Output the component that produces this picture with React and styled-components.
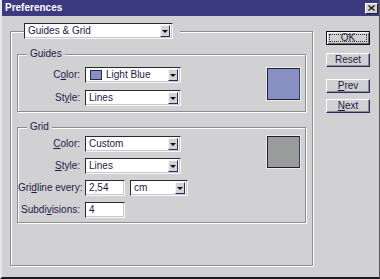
import React from "react";
import styled, { createGlobalStyle } from "styled-components";

const Global = createGlobalStyle`
  html, body { margin: 0; padding: 0; background: #d1d1d3; }
  * { box-sizing: border-box; }
`;

const Window = styled.div`
  width: 380px;
  height: 279px;
  background: #d1d1d3;
  border-left: 2px solid #e6e6e8;
  border-right: 1px solid #555;
  border-bottom: 2px solid #1c1c1c;
  display: flex;
  flex-direction: column;
  font-family: "Liberation Sans Narrow", "Liberation Sans", Arial, sans-serif;
  font-size: 10px;
  color: #1c1c48;
`;

const TitleBar = styled.div`
  height: 16px;
  flex: none;
  background: #3b3a80;
  display: flex;
  align-items: center;
  justify-content: space-between;
  padding: 0 1px 0 3px;
`;

const Title = styled.span`
  color: #fff;
  font-weight: bold;
  font-size: 10px;
  line-height: 16px;
`;

const CloseBtn = styled.div`
  width: 13px;
  height: 11px;
  background: #d4d4d6;
  border: 1px solid;
  border-color: #fff #222 #222 #fff;
  display: flex;
  align-items: center;
  justify-content: center;
`;

const Content = styled.div`
  display: flex;
  padding: 7px 0 0 8px;
  gap: 13px;
`;

const OuterSet = styled.fieldset`
  margin: 0;
  width: 303px;
  min-inline-size: 0;
  padding: 0 6px 42px 6px;
  border: 1px solid #8c8c90;
  box-shadow: 1px 1px 0 #fff, inset 1px 1px 0 #fff;
`;

const OuterLegend = styled.legend`
  margin-left: 7px;
  padding: 0 7px 0 0;
  background: #d1d1d3;
  display: flex;
`;

const GroupSet = styled.fieldset`
  margin: ${(p) => p.$mt}px 0 0 0;
  min-inline-size: 0;
  padding: ${(p) => p.$pt}px 0 ${(p) => p.$pb}px 0;
  border: 1px solid #8c8c90;
  box-shadow: 1px 1px 0 #fff, inset 1px 1px 0 #fff;
  display: flex;
  justify-content: space-between;
  align-items: flex-start;
`;

const GroupLegend = styled.legend`
  margin-left: 9px;
  padding: 0 3px;
  line-height: 12px;
  background: #d1d1d3;
  color: #1c1c48;
`;

const FormGrid = styled.div`
  display: grid;
  grid-template-columns: 62px auto;
  column-gap: 5px;
  row-gap: ${(p) => p.$gap}px;
  align-items: center;
`;

const Label = styled.label`
  text-align: right;
  white-space: nowrap;
  line-height: 16px;
`;

const U = styled.span`
  text-decoration: underline;
  text-underline-offset: 1px;
`;

const Controls = styled.div`
  display: flex;
  gap: 5px;
`;

const Field = styled.div`
  width: ${(p) => p.$w}px;
  height: 16px;
  background: #fff;
  border: 1px solid;
  border-color: #2a2a2e #f6f6f6 #f6f6f6 #2a2a2e;
  box-shadow: inset -1px -1px 0 #c8c8cc;
  display: flex;
  align-items: center;
  padding: 0 2px 0 3px;
  color: #1c1c48;
  line-height: 14px;
  white-space: nowrap;
`;

const FieldText = styled.span`
  flex: 1;
  overflow: hidden;
`;

const ArrowBtn = styled.span`
  width: 10px;
  height: 12px;
  flex: none;
  background: #d4d4d6;
  border: 1px solid;
  border-color: #f4f4f4 #2c2c6a #2c2c6a #f4f4f4;
  display: flex;
  align-items: center;
  justify-content: center;
`;

const Triangle = styled.span`
  width: 0;
  height: 0;
  border-left: 3px solid transparent;
  border-right: 3px solid transparent;
  border-top: 3px solid #111;
`;

const MiniSwatch = styled.span`
  width: 12px;
  height: 10px;
  flex: none;
  background: ${(p) => p.$c};
  border: 1px solid #2a2a48;
  margin: 0 4px 0 1px;
`;

const Swatch = styled.div`
  width: 33px;
  height: 32px;
  flex: none;
  margin: ${(p) => p.$mt}px 5px 0 0;
  background: ${(p) => p.$c};
  border: 1px solid #1e1e2c;
  border-right-color: #3a3a70;
  box-shadow: 0 0 0 1px #ececee;
`;

const ButtonCol = styled.div`
  display: flex;
  flex-direction: column;
  padding-top: 8px;
  width: 44px;
`;

const Btn = styled.button`
  position: relative;
  width: 44px;
  height: 14px;
  margin: ${(p) => p.$mt}px 0 0 0;
  padding: 0;
  font: inherit;
  color: #1c1c48;
  line-height: 12px;
  background: #d1d1d3;
  border: 1px solid;
  border-color: ${(p) => (p.$default ? "#111" : "#fff #2a2a5e #2a2a5e #fff")};
  box-shadow: ${(p) =>
    p.$default
      ? "inset 1px 1px 0 #fff, inset -1px -1px 0 #6a6a70"
      : "inset -1px -1px 0 #8c8c92"};
  &::after {
    content: "";
    display: ${(p) => (p.$default ? "block" : "none")};
    position: absolute;
    inset: 2px;
    border: 1px dotted #333;
  }
`;

function Select({ w, children, swatch }) {
  return (
    <Field $w={w}>
      {swatch && <MiniSwatch $c={swatch} />}
      <FieldText>{children}</FieldText>
      <ArrowBtn>
        <Triangle />
      </ArrowBtn>
    </Field>
  );
}

export default function App() {
  return (
    <>
      <Global />
      <Window>
        <TitleBar>
          <Title>Preferences</Title>
          <CloseBtn>
            <svg width="7" height="6" viewBox="0 0 7 6">
              <path d="M0.5 0.5 L6.5 5.5 M6.5 0.5 L0.5 5.5" stroke="#111" strokeWidth="1.3" />
            </svg>
          </CloseBtn>
        </TitleBar>
        <Content>
          <OuterSet>
            <OuterLegend>
              <Select w={149}>Guides &amp; Grid</Select>
            </OuterLegend>

            <GroupSet $mt={9} $pt={7} $pb={5}>
              <GroupLegend>Guides</GroupLegend>
              <FormGrid $gap={7}>
                <Label>
                  C<U>o</U>lor:
                </Label>
                <Select w={96} swatch="#8890c8">
                  Light Blue
                </Select>
                <Label>
                  St<U>y</U>le:
                </Label>
                <Select w={96}>Lines</Select>
              </FormGrid>
              <Swatch $c="#8890c4" $mt={1} />
            </GroupSet>

            <GroupSet $mt={9} $pt={3} $pb={4}>
              <GroupLegend>Grid</GroupLegend>
              <FormGrid $gap={6}>
                <Label>
                  <U>C</U>olor:
                </Label>
                <Select w={96}>Custom</Select>
                <Label>
                  <U>S</U>tyle:
                </Label>
                <Select w={96}>Lines</Select>
                <Label>
                  Gri<U>d</U>line every:
                </Label>
                <Controls>
                  <Field $w={40}>2,54</Field>
                  <Select w={58}>cm</Select>
                </Controls>
                <Label>
                  Subdi<U>v</U>isions:
                </Label>
                <Field $w={40}>4</Field>
              </FormGrid>
              <Swatch $c="#9a9c9b" $mt={0} />
            </GroupSet>
          </OuterSet>

          <ButtonCol>
            <Btn $default $mt={0}>OK</Btn>
            <Btn $mt={8}>Reset</Btn>
            <Btn $mt={12}>
              <U>P</U>rev
            </Btn>
            <Btn $mt={6}>
              <U>N</U>ext
            </Btn>
          </ButtonCol>
        </Content>
      </Window>
    </>
  );
}
